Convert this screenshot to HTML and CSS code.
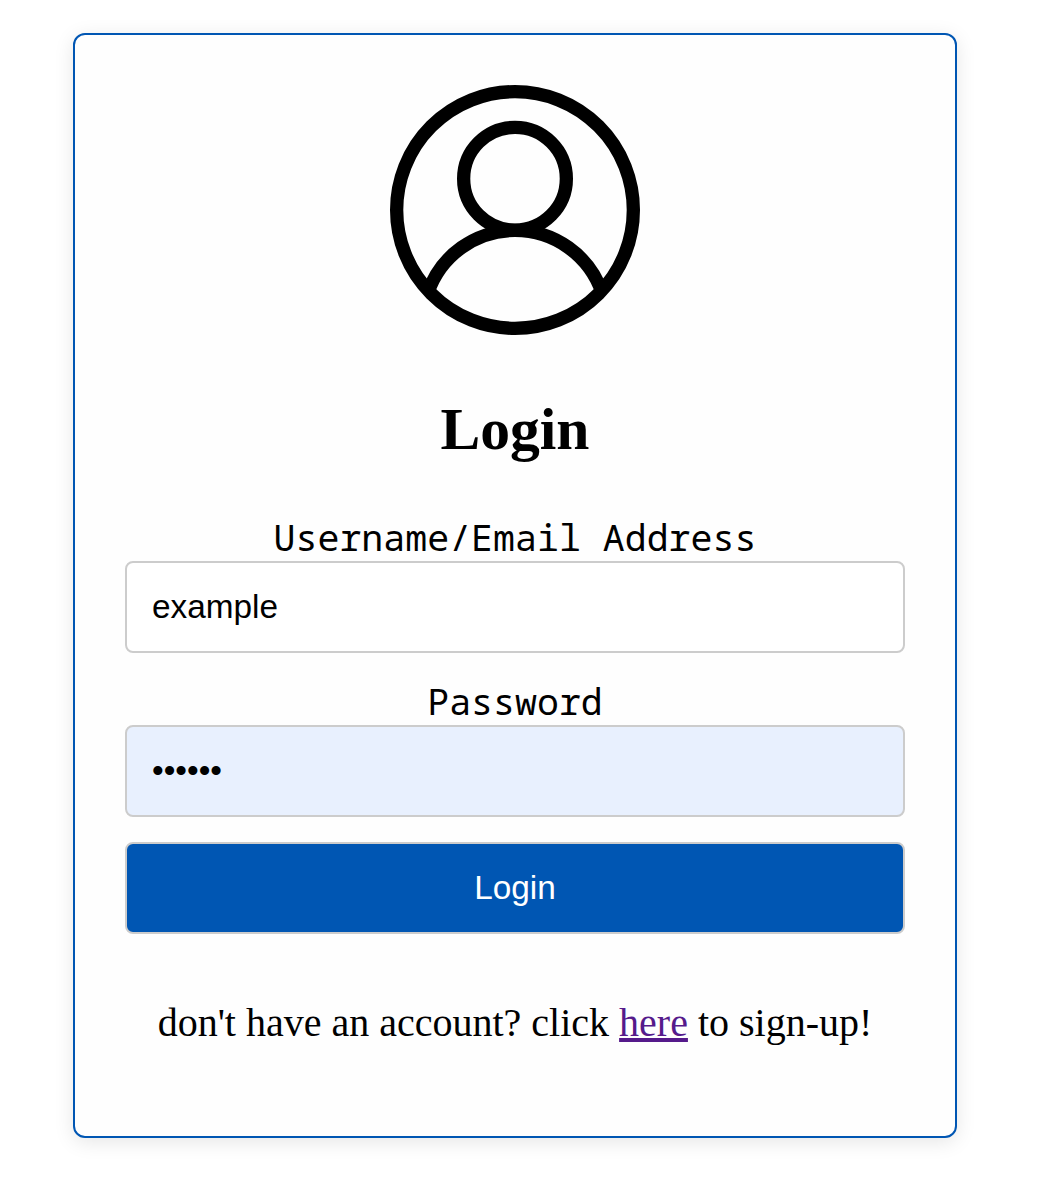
FILE: index.html
```html
<!DOCTYPE html>
<html lang="en">
<head>
<meta charset="utf-8">
<title>Login</title>
<link rel="stylesheet" href="styles.css">
</head>
<body>
<main class="card">
  <svg class="avatar" viewBox="0 0 250 250" aria-hidden="true">
    <circle cx="125" cy="125" r="118.35"/>
    <circle cx="125" cy="93.700" r="51.350"/>
    <path d="M38 207.500A92 92 0 0 1 212 207.500"/>
  </svg>
  <h1 class="title">Login</h1>
  <form class="form">
    <label class="label" for="user">Username/Email Address</label>
    <input class="field" id="user" type="text" value="example">
    <label class="label" for="pass">Password</label>
    <input class="field field-filled" id="pass" type="password" value="secret">
    <button class="submit" type="button">Login</button>
  </form>
  <p class="signup">don't have an account? click <a class="link" href="#">here</a> to sign-up!</p>
</main>
</body>
</html>
```

FILE: styles.css
```css
* { box-sizing: border-box; }
body {
  min-height: 100vh;
  margin: 0;
  padding: 33px 0 0 73px;
  background: #fff;
  color: #000;
  font-family: "Liberation Serif", "Times New Roman", serif;
}
.card {
  width: 884px;
  height: 1105px;
  padding: 50px;
  border: 2px solid #0056b3;
  border-radius: 12px;
  background: #fefefe;
  box-shadow: 0 4px 20px rgba(0, 0, 0, .1);
  text-align: center;
}
.avatar {
  display: block;
  width: 250px;
  height: 250px;
  margin: 0 auto;
  fill: none;
  stroke: #000;
  stroke-width: 13.3;
}
.title {
  margin: 60px 0 0;
  font-size: 59.6px;
  line-height: 68px;
}
.form { margin-top: 51px; }
.label {
  display: block;
  height: 47px;
  font: 36.6px/47px "Noto Sans Mono", "DejaVu Sans Mono", monospace;
}
.field, .submit {
  display: block;
  width: 780px;
  height: 92px;
  margin: 0 0 25px;
  padding: 0 25px;
  border: 2px solid #ccc;
  border-radius: 8px;
  background: #fff;
  color: #000;
  font: 33.33px "Liberation Sans", Arial, sans-serif;
}
.field-filled { background: #e8f0fe; }
.submit {
  background: #0056b3;
  color: #fff;
}
.signup {
  margin: 66px 0 0;
  font-size: 40px;
  line-height: 46px;
}
.link { color: #551a8b; }
```
